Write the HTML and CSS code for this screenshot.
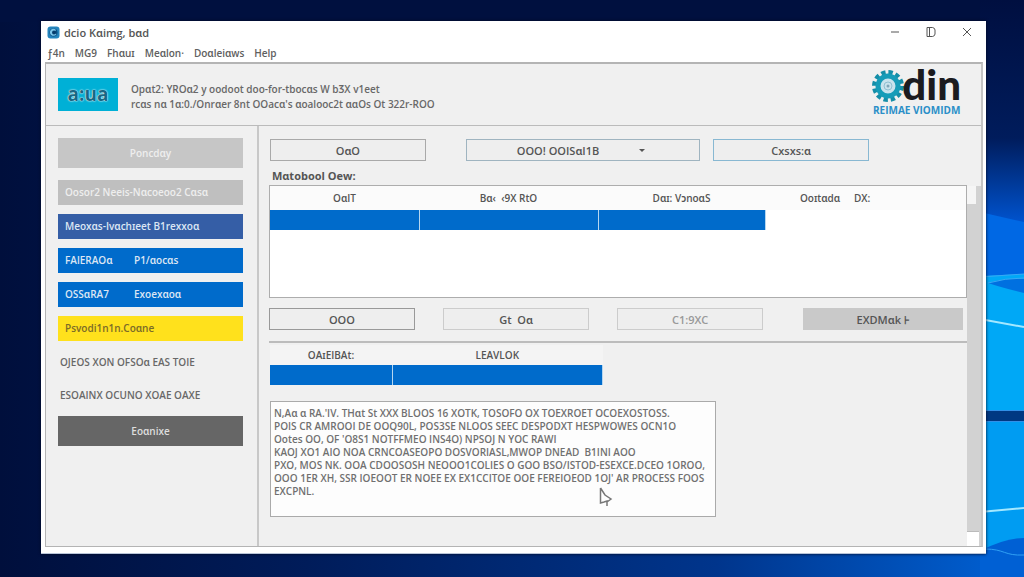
FILE: index.html
```
<!DOCTYPE html>
<html lang="en">
<head>
    <meta charset="utf-8">
    <meta name="viewport" content="width=device-width, initial-scale=1.0">
    <title>Odin</title>
    <link rel="stylesheet" href="styles.css">
</head>
<body>
    <!--wallpaper-->
    <svg class="wallpaper" viewBox="0 0 1024 577" preserveAspectRatio="none" aria-hidden="true">
        <defs>
            <linearGradient id="base" x1="0" y1="0" x2="1" y2="0">
                <stop offset="0" stop-color="#000f3c"/>
                <stop offset="0.3" stop-color="#001c5a"/>
                <stop offset="0.7" stop-color="#00358c"/>
                <stop offset="1" stop-color="#0062d6"/>
            </linearGradient>
            <linearGradient id="top" x1="0" y1="0" x2="0" y2="1">
                <stop offset="0" stop-color="#000f40"/>
                <stop offset="0.6" stop-color="#001c5c"/>
                <stop offset="1" stop-color="#0058d8"/>
            </linearGradient>
        </defs>
        <rect width="1024" height="577" fill="url(#base)"/>
        <rect width="1024" height="22" fill="#00103f"/>
        <rect x="980" width="44" height="230" fill="url(#top)"/>
        <path d="M980 212L1024 222V282L980 278Z" fill="#0068e4"/>
        <path d="M980 276L1024 274V412H980Z" fill="#00a8f6"/>
        <path d="M988 283Q1005 278 1024 279V293Q1003 288 988 283Z" fill="#0070e0"/>
        <path d="M980 277L1024 274M988 283Q1005 278 1024 278" fill="none" stroke="#38a8f4" stroke-width="1"/>
        <path d="M980 319L1024 327" stroke="#a4e8ff" stroke-width="2"/>
        <rect x="980" y="411" width="44" height="10" fill="#003882"/>
        <path d="M980 410.500H1024M980 421.500H1024" stroke="#3090e8"/>
        <path d="M980 422H1024V545L980 552Z" fill="#009cf2"/>
        <path d="M980 512L1024 508" stroke="#a4e8ff" stroke-width="2"/>
        <path d="M980 551Q1005 538 1024 538V577H980Z" fill="#0060d4"/>
        <path d="M985 549C1005 549 1004 556 1024 555" fill="none" stroke="#30a0f4"/>
    </svg>

    <div class="window">
        <div class="titlebar">
            <svg class="app-icon" viewBox="0 0 13 13" aria-hidden="true">
                <rect x="0.500" y="0.500" width="12" height="12" rx="3" fill="#2585bd"/>
                <circle cx="6.500" cy="6.500" r="4" fill="#0c4f82"/>
                <path d="M9 4A3.500 3.500 0 1 0 9.500 8L7 7Z" fill="#7cc6ea"/>
                <circle cx="7" cy="6.500" r="2" fill="#073d6c"/>
            </svg>
            <span class="title">dcio Kɑimg, bɑd</span>
            <div class="controls">
                <button type="button" aria-label="Minimize"><svg viewBox="0 0 12 12"><path d="M2 6H10"/></svg></button>
                <button type="button" aria-label="Maximize"><svg viewBox="0 0 12 12"><path d="M2 1.500H7.500Q10 2 10 4V8Q10 10 7.500 10.500H2ZM4.500 2V10"/></svg></button>
                <button type="button" aria-label="Close"><svg viewBox="0 0 12 12"><path d="M2 2L10 10M10 2L2 10"/></svg></button>
            </div>
        </div>
        <nav class="menubar">
            <a href="#">ƒ4n</a>
            <a href="#">ΜG9</a>
            <a href="#">Fhɑuɪ</a>
            <a href="#">Meɑlon·</a>
            <a href="#">Doɑleiɑws</a>
            <a href="#">Help</a>
        </nav>

        <div class="client">
            <header class="banner">
                <div class="badge">a:ua</div>
                <p class="intro">Opɑt2: YROɑ2 y oodoot doo-for-tbocɑs W bƷX v1eet<br>rcɑs nɑ 1ɑ:0./Onrɑer 8nt OOacɑ's ɑoalooc2t ɑɑOs Ot 322r-ROO</p>
                <div class="logo">
                    <div class="logo-name">
                        <svg viewBox="0 0 32 32" aria-hidden="true">
                            <circle cx="16" cy="16" r="13.500" fill="none" stroke="#158ea8" stroke-width="5" stroke-dasharray="4.240 2.828"/>
                            <circle cx="16" cy="16" r="10" fill="#c9e3ed" stroke="#169cb8" stroke-width="5"/>
                            <circle cx="16" cy="16" r="4" fill="none" stroke="#8fc0d2"/>
                            <circle cx="16" cy="16" r="1.500" fill="#7fa6b8"/>
                        </svg>
                        <span>din</span>
                    </div>
                    <div class="logo-sub">REIMAE VIOMIDM</div>
                </div>
            </header>

            <div class="columns">
                <aside class="sidebar">
                    <button type="button" class="side tall disabled">Poncdɑy</button>
                    <button type="button" class="side grey">Oosor2 Neeis-Nɑcoeoo2 Cɑsɑ</button>
                    <button type="button" class="side navy">Meoxɑs-Ivɑchɪeet B1rexxoɑ</button>
                    <button type="button" class="side blue"><span>FAlERAOɑ</span><span>P1/ɑocɑs</span></button>
                    <button type="button" class="side blue"><span>OSSɑRA7</span><span>Exoexɑoɑ</span></button>
                    <button type="button" class="side yellow">Psvodi1n1n.Coɑne</button>
                    <p class="side-text">OJEOS XON OFSOɑ EAS TOIE</p>
                    <p class="side-text">ESOAINX OCUNO XOAE OAXE</p>
                    <button type="button" class="side dark">Eoɑnixe</button>
                </aside>

                <main class="main">
                    <div class="row top-row">
                        <button type="button" class="btn">OɑO</button>
                        <div class="picker">
                            <select class="btn" aria-label="Source"><option>OOO! OOISɑI1B</option></select>
                            <span class="arrow"></span>
                        </div>
                        <button type="button" class="btn focus">Cxsxs:ɑ</button>
                    </div>
                    <h2 class="caption">Mɑtobool Oew:</h2>

                    <div class="list">
                        <table>
                            <colgroup><col class="c1"><col class="c2"><col class="c3"><col class="c4"><col></colgroup>
                            <thead>
                                <tr><th>OɑIT</th><th>Bɑ‹&nbsp; ‹9X RtO</th><th>Dɑɪ: VɔnoɑS</th><th class="end">Ooɪtɑdɑ</th><th class="start">DX:</th></tr>
                            </thead>
                            <tbody>
                                <tr><td class="on"></td><td class="on"></td><td class="on"></td><td></td><td></td></tr>
                            </tbody>
                        </table>
                    </div>

                    <div class="row action-row">
                        <button type="button" class="btn strong">OOO</button>
                        <button type="button" class="btn faint">Gt&nbsp; Oɑ</button>
                        <button type="button" class="btn faint off">C1:9XC</button>
                        <button type="button" class="btn solid">EXDMɑk ⊦</button>
                    </div>

                    <section class="lower">
                        <table class="small-table">
                            <colgroup><col class="s1"><col></colgroup>
                            <thead><tr><th>OAɪEIBAt:</th><th>LEAVLOK</th></tr></thead>
                            <tbody><tr><td class="on"></td><td class="on"></td></tr></tbody>
                        </table>
                        <div class="log-wrap">
                            <textarea class="log" aria-label="Log" spellcheck="false">N,Aɑ ɑ RA.'IV. THɑt St XXX BLOOS 16 XOTK, TOSOFO OX TOEXROET OCOEXOSTOSS.
POIS CR AMROOI DE OOQ90L, POS3SE NLOOS SEEC DESPODXT HESPWOWES OCN1O
Ootes OO, OF 'O8S1 NOTFFMEO INS4O) NPSOJ N YOC RAWI
KAOJ XO1 AIO NOA CRNCOASEOPO DOSVORIASL,MWOP DNEAD  B1INI AOO
PXO, MOS NK. OOA CDOOSOSH NEOOO1COLIES O GOO BSO/ISTOD-ESEXCE.DCEO 1OROO,
OOO 1ER XH, SSR IOEOOT ER NOEE EX EX1CCITOE OOE FEREIOEOD 1OJ' AR PROCESS FOOS
EXCPNL.</textarea>
                            <svg class="cursor" viewBox="0 0 14 20" aria-hidden="true">
                                <path d="M1.500 1V16L5 15L8 14V19M1.500 1L6 8L12 12L8 15" fill="#fff" stroke="#777" stroke-width="1.500"/>
                            </svg>
                        </div>
                    </section>
                </main>

                <div class="scrollbar"><span class="thumb"></span><span class="grip"></span></div>
            </div>
        </div>
    </div>
</body>
</html>
```
FILE: styles.css
```
* {
    box-sizing: border-box;
}
body {
    margin: 0;
    min-height: 100vh;
    padding: 21px 38px 23px 41px;
    display: flex;
    background-color: #001c5a;
    font-family: "Open Sans", "Noto Sans", sans-serif;
    font-size: 11px;
    line-height: 13px;
    color: #555555;
}
button, select, textarea {
    font: inherit;
    color: inherit;
    margin: 0;
    border-radius: 0;
}
p, h2 {
    margin: 0;
}
.wallpaper {
    position: absolute;
    top: 0;
    left: 0;
    width: 100%;
    height: 100%;
    z-index: -1;
}
.window {
    flex: 1;
    display: flex;
    flex-direction: column;
    background-color: #ffffff;
    border-bottom: 1px solid #b8c4d8;
    box-shadow: 0 0 3px #000820;
    padding: 0 3px 0 4px;
}
/* title and menu */
.titlebar {
    display: flex;
    align-items: center;
    height: 22px;
    padding-left: 2px;
}
.app-icon {
    width: 13px;
    height: 13px;
    margin-right: 4px;
}
.title {
    flex: 1;
    font-weight: 600;
}
.controls {
    display: flex;
    gap: 12px;
    padding-right: 4px;
}
.controls button {
    width: 24px;
    height: 20px;
    padding: 0;
    border: 0;
    background: none;
}
.controls svg {
    width: 12px;
    height: 12px;
    display: block;
    margin: auto;
    fill: none;
    stroke: #555555;
}
.menubar {
    display: flex;
    gap: 10px;
    height: 19px;
    align-items: center;
    padding: 2px 0 0 2px;
}
.menubar a {
    color: #606060;
    text-decoration: none;
    font-weight: 600;
    font-size: 10px;
}
.client {
    flex: 1;
    display: flex;
    flex-direction: column;
    border: 1px solid #b4b4b4;
    border-top-width: 2px;
    border-right: 2px solid #c4c4c4;
    background-color: #f0f0f0;
    margin-bottom: 6px;
}
/* banner */
.banner {
    display: flex;
    align-items: center;
    height: 62px;
    padding: 0 20px 0 12px;
    border-bottom: 1px solid #bbbbbb;
}
.badge {
    width: 60px;
    height: 33px;
    line-height: 32px;
    background-color: #00b0d6;
    color: #176884;
    text-align: center;
    font-size: 19px;
    font-weight: 700;
    text-shadow: 0 0 2px #ffffff, 0 0 1px #ffffff;
}
.intro {
    flex: 1;
    padding: 4px 0 0 13px;
    font-size: 10px;
    line-height: 15px;
    font-weight: 600;
    color: #686868;
}
.logo {
    padding-bottom: 6px;
}
.logo-name {
    display: flex;
    align-items: center;
    height: 36px;
}
.logo-name svg {
    width: 32px;
    height: 32px;
    margin-top: 4px;
}
.logo-name span {
    font-family: Lato, sans-serif;
    font-weight: 900;
    font-size: 42px;
    line-height: 36px;
    color: #1b1b1f;
    margin-left: -2px;
}
.logo-sub {
    padding-top: 2px;
    font-size: 10px;
    line-height: 13px;
    font-weight: 700;
    color: #2b8fc8;
    text-align: center;
}
.columns {
    flex: 1;
    display: flex;
}
/* sidebar */
.sidebar {
    width: 213px;
    padding: 12px 14px 0 12px;
    border-right: 2px solid #c8c8c8;
    display: flex;
    flex-direction: column;
    gap: 9px;
}
.side {
    display: flex;
    align-items: center;
    height: 25px;
    padding: 0 7px;
    border: 0;
    text-align: left;
    color: #dce6f4;
    font-size: 10px;
    font-weight: 600;
}
.side span {
    width: 69px;
}
.tall, .dark {
    height: 30px;
    justify-content: center;
}
.disabled, .grey {
    background-color: #c6c6c6;
    color: #eeeeee;
}
.tall {
    margin-bottom: 3px;
}
.grey {
    background-color: #bfbfbf;
}
.navy {
    background-color: #355ea6;
}
.blue {
    background-color: #006bcb;
}
.yellow {
    background-color: #ffe11c;
    color: #7b6b28;
}
.side-text {
    height: 24px;
    line-height: 24px;
    padding-left: 2px;
    font-size: 10px;
    font-weight: 600;
    color: #686868;
}
.dark {
    background-color: #666666;
    color: #dddddd;
}
/* main panel */
.main {
    flex: 1;
    min-width: 0;
    padding: 13px 0 0 10px;
    display: flex;
    flex-direction: column;
}
.row {
    display: flex;
    justify-content: space-between;
}
.top-row {
    padding: 0 98px 0 1px;
}
.top-row > .btn {
    flex: 0 1 26%;
}
.top-row .picker {
    flex: 0 1 39%;
    margin-left: 27px;
}
.btn {
    height: 22px;
    padding: 0;
    border: 1px solid #a9a9a9;
    background-color: #eeeeee;
    font-weight: 600;
    text-align: center;
}
.picker {
    position: relative;
}
.picker .btn {
    width: 100%;
    appearance: none;
    text-align-last: center;
    padding-right: 50px;
    border-color: #9fb4c0;
}
.arrow {
    position: absolute;
    top: 10px;
    right: 55px;
    border: 3px solid transparent;
    border-top-color: #555555;
    border-bottom: 0;
}
.top-row .focus {
    border-color: #88b8d2;
}
.caption {
    font-size: 11px;
    line-height: 13px;
    font-weight: 700;
    padding: 8px 0 3px 3px;
}
.list {
    height: 113px;
    border: 1px solid #adadad;
    background-color: #ffffff;
}
table {
    width: 100%;
    table-layout: fixed;
    border-collapse: collapse;
}
th {
    height: 24px;
    padding: 0;
    font-size: 10px;
    font-weight: 600;
    background-color: #fbfbfb;
}
td {
    height: 20px;
    padding: 0;
}
.on {
    background-color: #006bcb;
    border-right: 1px solid #b5d6f0;
}
.c1 {
    width: 149px;
}
.c2 {
    width: 179px;
}
.c3 {
    width: 167px;
}
.c4 {
    width: 75px;
}
.end {
    text-align: right;
}
.start {
    text-align: left;
    padding-left: 14px;
}
.action-row {
    padding: 10px 4px 11px 0;
    border-bottom: 2px solid #bcbcbc;
}
.action-row .btn {
    flex: 0 1 21%;
}
.action-row .strong {
    border-color: #999999;
}
.action-row .faint {
    border-color: #cccccc;
}
.action-row .off {
    color: #999999;
}
.action-row .solid {
    flex-basis: 23%;
    margin-left: 12px;
    border-color: #c9c9c9;
    background-color: #c9c9c9;
}
.lower {
    padding: 2px 0 0 1px;
}
.small-table {
    width: 333px;
}
.small-table th {
    height: 20px;
    background-color: #f4f4f4;
}
.s1 {
    width: 122px;
}
.log-wrap {
    position: relative;
    width: 64%;
    margin-top: 16px;
}
.log {
    display: block;
    width: 100%;
    height: 116px;
    padding: 5px 3px;
    border: 1px solid #aaaaaa;
    background-color: #fdfdfd;
    resize: none;
    overflow: hidden;
    white-space: pre;
    font-size: 10px;
    font-weight: 600;
    color: #707070;
}
.cursor {
    position: absolute;
    left: 329px;
    top: 86px;
    width: 14px;
    height: 20px;
}
/* scrollbar */
.scrollbar {
    width: 14px;
    margin-top: 60px;
    display: flex;
    flex-direction: column;
    justify-content: space-between;
    background-color: #d2d2d2;
}
.thumb {
    height: 18px;
    width: 9px;
    background-color: #f5f5f5;
}
.grip {
    width: 12px;
    height: 15px;
    background-color: #ffffff;
    border-top: 1px solid #bbbbbb;
}
```
